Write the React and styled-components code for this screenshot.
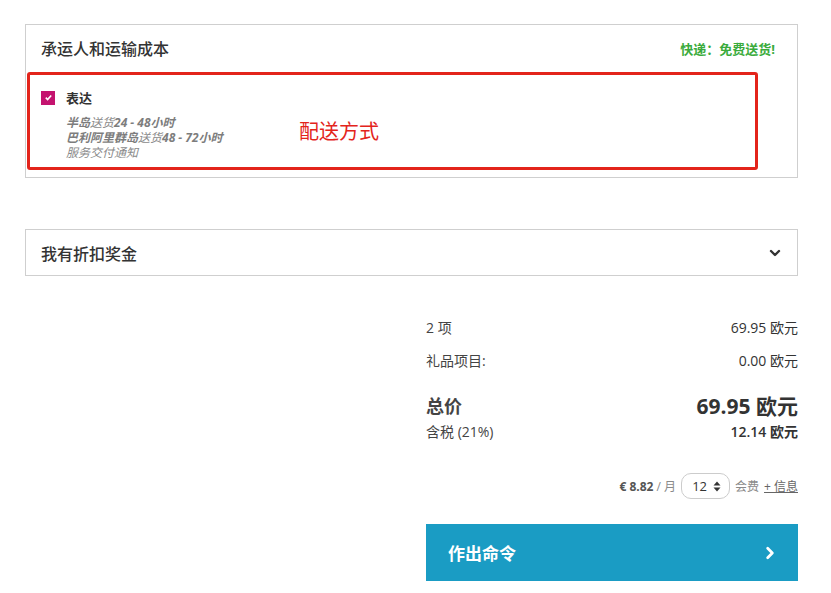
import React, { useState } from 'react';
import styled, { createGlobalStyle } from 'styled-components';

const GlobalStyle = createGlobalStyle`
  *, *::before, *::after {
    box-sizing: border-box;
  }
  body {
    margin: 0;
    background: #fff;
    font-family: "Open Sans", "Noto Sans CJK SC", sans-serif;
    color: #333;
  }
`;

const Page = styled.div`
  width: 798px;
  padding: 24px 0 0 25px;
`;

const Card = styled.section`
  border: 1px solid #cfcfcf;
  background: #fff;
  margin-top: ${({ $gap }) => $gap || 0}px;
`;

const CardHeader = styled.div`
  display: flex;
  align-items: center;
  justify-content: space-between;
  height: ${({ $h }) => $h}px;
  padding: 0 ${({ $pr }) => $pr || 22}px 0 15px;
  cursor: ${({ $clickable }) => ($clickable ? 'pointer' : 'default')};
`;

const CardTitle = styled.h3`
  margin: 0;
  font-size: 16px;
  font-weight: 500;
  color: #333;
`;

const FreeShipping = styled.span`
  font-size: 13px;
  font-weight: 700;
  color: #3aab3c;
`;

const CardBody = styled.div`
  padding: 1px 0 7px 1px;
`;

const Highlight = styled.div`
  position: relative;
  width: 731px;
  height: 98px;
  border: 3px solid #e3241b;
  border-radius: 3px;
  padding: 13px 0 0 11px;
`;

const OptionRow = styled.label`
  display: flex;
  align-items: center;
  gap: 11px;
  font-size: 13px;
  font-weight: 700;
  color: #333;
`;

const Check = styled.span`
  width: 14px;
  height: 14px;
  background: #c4136f;
  display: flex;
  align-items: center;
  justify-content: center;
`;

const Details = styled.div`
  margin: 8px 0 0 25px;
  font-size: 12px;
  font-style: italic;
  color: #8a8a8a;

  b {
    font-weight: 700;
    color: #7d7d7d;
  }
`;

const DetailLine = styled.div`
  height: 15px;
  line-height: 15px;
  white-space: nowrap;
`;

const Annotation = styled.span`
  position: absolute;
  left: 269px;
  top: 41px;
  font-size: 20px;
  color: #e3241b;
  font-family: "Noto Sans CJK SC", sans-serif;
`;

const Summary = styled.div`
  width: 372px;
  margin: 34px 0 0 auto;
  padding-bottom: 12px;
`;

const Line = styled.div`
  display: flex;
  justify-content: space-between;
  align-items: center;
  height: ${({ $h }) => $h}px;
  margin-top: ${({ $mt }) => $mt || 0}px;
  font-size: ${({ $size }) => $size}px;
  font-weight: ${({ $bold }) => ($bold ? 700 : 400)};
  color: #444;
`;

const Value = styled.span`
  color: #333;
  font-size: ${({ $size }) => ($size ? `${$size}px` : 'inherit')};
  font-weight: ${({ $w }) => $w || 'inherit'};
`;

const Installments = styled.div`
  display: flex;
  justify-content: flex-end;
  align-items: center;
  gap: 5px;
  margin-top: 32px;
  font-size: 12px;
  color: #8a8a8a;
`;

const Price = styled.span`
  font-weight: 700;
  color: #555;
`;

const Months = styled.div`
  display: flex;
  align-items: center;
  gap: 6px;
  height: 26px;
  padding: 0 8px 0 10px;
  border: 1px solid #ccc;
  border-radius: 10px;
  font-size: 13px;
  color: #333;
`;

const InfoLink = styled.a`
  color: #666;
  text-decoration: underline;
  cursor: pointer;
`;

const OrderButton = styled.button`
  display: flex;
  align-items: center;
  justify-content: space-between;
  width: 100%;
  height: 57px;
  margin-top: 25px;
  padding: 0 21px 0 22px;
  border: none;
  background: #1a9cc4;
  color: #fff;
  font-family: inherit;
  font-size: 17px;
  font-weight: 700;
  cursor: pointer;
`;

const Chevron = ({ dir = 'down', color = '#333', size = 12 }) => (
  <svg width={size} height={size} viewBox="0 0 12 12">
    <path
      d={dir === 'down' ? 'M2 4l4 4 4-4' : 'M4 2l4 4-4 4'}
      fill="none"
      stroke={color}
      strokeWidth="2.4"
      strokeLinecap="round"
      strokeLinejoin="round"
    />
  </svg>
);

const Sorter = () => (
  <svg width="8" height="11" viewBox="0 0 8 11">
    <path d="M4 0.5L7.5 4.5H0.5Z M4 10.5L7.5 6.5H0.5Z" fill="#333" />
  </svg>
);

export default function App() {
  const [months] = useState(12);

  return (
    <Page>
      <GlobalStyle />
      <Card>
        <CardHeader $h={46}>
          <CardTitle>承运人和运输成本</CardTitle>
          <FreeShipping>快递：免费送货!</FreeShipping>
        </CardHeader>
        <CardBody>
          <Highlight>
            <OptionRow>
              <Check>
                <svg width="9" height="9" viewBox="0 0 10 10">
                  <path d="M2 5.2l2 2 4-4.4" fill="none" stroke="#fff" strokeWidth="1.8" />
                </svg>
              </Check>
              表达
            </OptionRow>
            <Details>
              <DetailLine><b>半岛</b>送货<b>24 - 48小时</b></DetailLine>
              <DetailLine><b>巴利阿里群岛</b>送货<b>48 - 72小时</b></DetailLine>
              <DetailLine>服务交付通知</DetailLine>
            </Details>
            <Annotation>配送方式</Annotation>
          </Highlight>
        </CardBody>
      </Card>

      <Card $gap={51}>
        <CardHeader $h={45} $pr={16} $clickable>
          <CardTitle>我有折扣奖金</CardTitle>
          <Chevron dir="down" />
        </CardHeader>
      </Card>

      <Summary>
        <Line $h={33} $size={14}>
          <span>2 项</span>
          <Value>69.95 欧元</Value>
        </Line>
        <Line $h={33} $size={14}>
          <span>礼品项目:</span>
          <Value>0.00 欧元</Value>
        </Line>
        <Line $h={26} $mt={16} $size={18} $bold>
          <span>总价</span>
          <Value $size={21}>69.95 欧元</Value>
        </Line>
        <Line $h={20} $mt={3} $size={14}>
          <span>含税 (21%)</span>
          <Value $w={600}>12.14 欧元</Value>
        </Line>

        <Installments>
          <span><Price>€ 8.82</Price> / 月</span>
          <Months>
            {months}
            <Sorter />
          </Months>
          <span>会费</span>
          <InfoLink>+ 信息</InfoLink>
        </Installments>

        <OrderButton>
          作出命令
          <Chevron dir="right" color="#fff" size={14} />
        </OrderButton>
      </Summary>
    </Page>
  );
}
